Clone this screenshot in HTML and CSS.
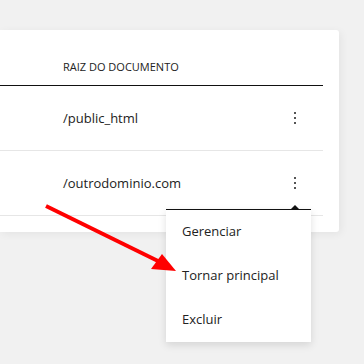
FILE: index.html
```html
<!DOCTYPE html>
<html lang="pt-BR">
<head>
  <meta charset="UTF-8">
  <title>Domínios</title>
  <link rel="stylesheet" href="styles.css">
</head>
<body>
  <div class="card">
    <div class="table">
      <div class="row head">
        <span class="cell">RAIZ DO DOCUMENTO</span>
      </div>
      <div class="row">
        <span class="cell">/public_html</span>
        <span class="kebab"><i></i><i></i><i></i></span>
      </div>
      <div class="row">
        <span class="cell">/outrodominio.com</span>
        <span class="kebab"><i></i><i></i><i></i></span>
      </div>
    </div>
  </div>

  <div class="menu">
    <span class="caret"></span>
    <div class="menu-item">Gerenciar</div>
    <div class="menu-item">Tornar principal</div>
    <div class="menu-item">Excluir</div>
  </div>

  <svg class="arrow" width="364" height="364" viewBox="0 0 364 364">
    <line x1="46" y1="206" x2="160" y2="262" stroke="#ff0000" stroke-width="4" />
    <polygon points="176,271 151,269 162,254" fill="#ff0000" />
  </svg>
</body>
</html>
```

FILE: styles.css
```css
body {
  margin: 0;
  padding-top: 30px;
  background: #f1f1f1;
  font-family: "Open Sans", sans-serif;
  color: #222;
  position: relative;
  height: 334px;
  overflow: hidden;
}

.card {
  width: 339px;
  background: #fff;
  border-radius: 0 3px 3px 0;
  box-shadow: 2px 2px 8px rgba(0,0,0,0.06);
  padding-right: 16px;
  padding-bottom: 16px;
  box-sizing: border-box;
}

.row {
  display: flex;
  align-items: center;
  height: 64px;
  border-bottom: 1px solid #e6e6e6;
  padding-left: 63px;
  padding-right: 27px;
}

.row.head {
  height: 55px;
  border-bottom: 1px solid #111;
  align-items: flex-start;
}

.row.head .cell {
  font-size: 11px;
  margin-top: 29px;
}

.cell {
  flex: 1;
  font-size: 13px;
}

.kebab {
  display: flex;
  flex-direction: column;
  gap: 3px;
  width: 2px;
}

.kebab i {
  display: block;
  width: 2px;
  height: 2px;
  background: #555;
}

.menu {
  position: absolute;
  left: 166px;
  top: 209px;
  width: 145px;
  background: #fff;
  border-top: 1px solid #111;
  box-shadow: 0 3px 8px rgba(0,0,0,0.12);
}

.caret {
  position: absolute;
  top: -5px;
  left: 125px;
  width: 0;
  height: 0;
  border-left: 4px solid transparent;
  border-right: 4px solid transparent;
  border-bottom: 4px solid #111;
}

.menu-item {
  height: 44px;
  line-height: 42px;
  padding-left: 16px;
  font-size: 13px;
}

.arrow {
  position: absolute;
  left: 0;
  top: 0;
}
```
